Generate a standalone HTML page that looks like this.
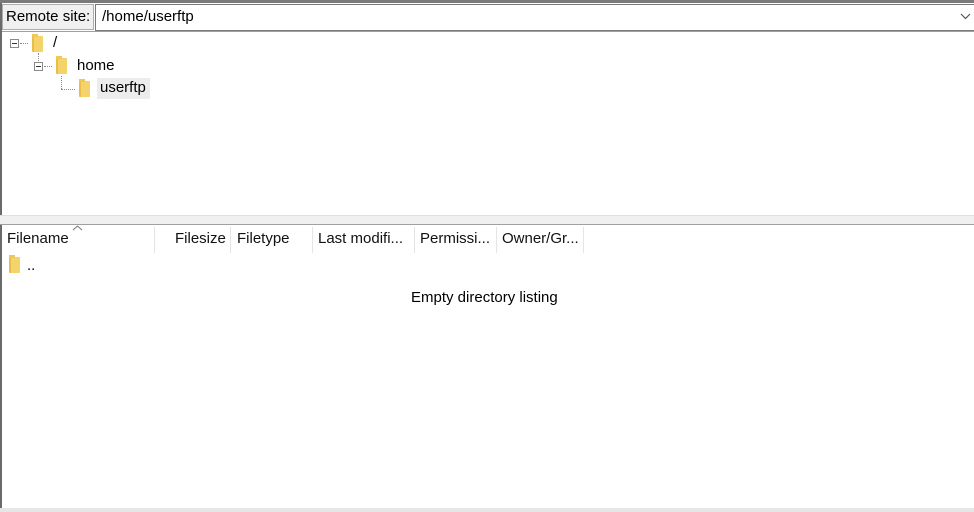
<!DOCTYPE html>
<html><head><meta charset="utf-8"><style>
*{box-sizing:border-box;margin:0;padding:0}
body{width:974px;height:512px;background:#fff;font-family:"Liberation Sans",sans-serif;font-size:15px;color:#000;position:relative;overflow:hidden}
.abs{position:absolute}
.folder{position:absolute;width:11px;height:16px;background:#f5d36b;border-left:2px solid #e8bd4a;border-radius:1px}
.folder:before{content:"";position:absolute;left:-2px;top:-2px;width:6px;height:3px;background:#f0c75a}
.tog{position:absolute;width:9px;height:9px;border:1px solid #8a8a8a;background:#fff}
.tog:after{content:"";position:absolute;left:1px;top:3px;width:5px;height:1px;background:#333}
.dotv{position:absolute;border-left:1px dotted #888}
.doth{position:absolute;border-top:1px dotted #888}
.hd{position:absolute;top:230px;font-size:15px;color:#111}
.sep{position:absolute;top:227px;width:1px;height:26px;background:#e5e5e5}
</style></head><body>
<div class="abs" style="left:0;top:0;width:974px;height:3px;background:#7a7a7a"></div>
<div class="abs" style="left:0;top:3px;width:2px;height:212px;background:#6a6a6a"></div>
<div class="abs" style="left:2px;top:4px;width:92px;height:26px;background:#f0f0f0;border:1px solid #adadad"></div>
<div class="abs" style="left:6px;top:8px">Remote site:</div>
<div class="abs" style="left:95px;top:4px;width:879px;height:27px;border:1px solid #7a7a7a;border-right:none;background:#fff"></div>
<div class="abs" style="left:102px;top:8px">/home/userftp</div>
<svg class="abs" style="left:960px;top:13px" width="11" height="7"><path d="M1 1 L5.5 5.5 L10 1" stroke="#555" fill="none" stroke-width="1.2"/></svg>
<div class="abs" style="left:2px;top:31px;width:972px;height:1px;background:#a0a0a0"></div>

<div class="tog" style="left:10px;top:39px"></div>
<div class="doth" style="left:20px;top:43px;width:8px"></div>
<div class="folder" style="left:32px;top:36px"></div>
<div class="abs" style="left:53px;top:34px">/</div>
<div class="dotv" style="left:38px;top:53px;height:10px"></div>
<div class="tog" style="left:34px;top:62px"></div>
<div class="doth" style="left:44px;top:66px;width:8px"></div>
<div class="folder" style="left:56px;top:58px"></div>
<div class="abs" style="left:77px;top:57px">home</div>
<div class="dotv" style="left:61px;top:76px;height:13px"></div>
<div class="doth" style="left:61px;top:89px;width:14px"></div>
<div class="folder" style="left:79px;top:81px"></div>
<div class="abs" style="left:97px;top:78px;width:53px;height:21px;background:#ececec"></div>
<div class="abs" style="left:100px;top:79px">userftp</div>

<div class="abs" style="left:0;top:215px;width:974px;height:10px;background:#f0f0f0;border-top:1px solid #e0e0e0"></div>
<div class="abs" style="left:0;top:224px;width:974px;height:1px;background:#a0a0a0"></div>
<div class="abs" style="left:0;top:225px;width:2px;height:287px;background:#6a6a6a"></div>
<div class="abs" style="left:0;top:508px;width:974px;height:4px;background:#e6e6e6"></div>

<svg class="abs" style="left:72px;top:225px" width="11" height="6"><path d="M1 5 L5.5 1 L10 5" stroke="#777" fill="none"/></svg>
<div class="hd" style="left:7px">Filename</div>
<div class="sep" style="left:154px"></div>
<div class="hd" style="left:175px">Filesize</div>
<div class="sep" style="left:230px"></div>
<div class="hd" style="left:237px">Filetype</div>
<div class="sep" style="left:312px"></div>
<div class="hd" style="left:318px">Last modifi...</div>
<div class="sep" style="left:414px"></div>
<div class="hd" style="left:420px">Permissi...</div>
<div class="sep" style="left:496px"></div>
<div class="hd" style="left:502px">Owner/Gr...</div>
<div class="sep" style="left:583px"></div>

<div class="folder" style="left:9px;top:257px"></div>
<div class="abs" style="left:27px;top:257px">..</div>
<div class="abs" style="left:411px;top:289px">Empty directory listing</div>
</body></html>
